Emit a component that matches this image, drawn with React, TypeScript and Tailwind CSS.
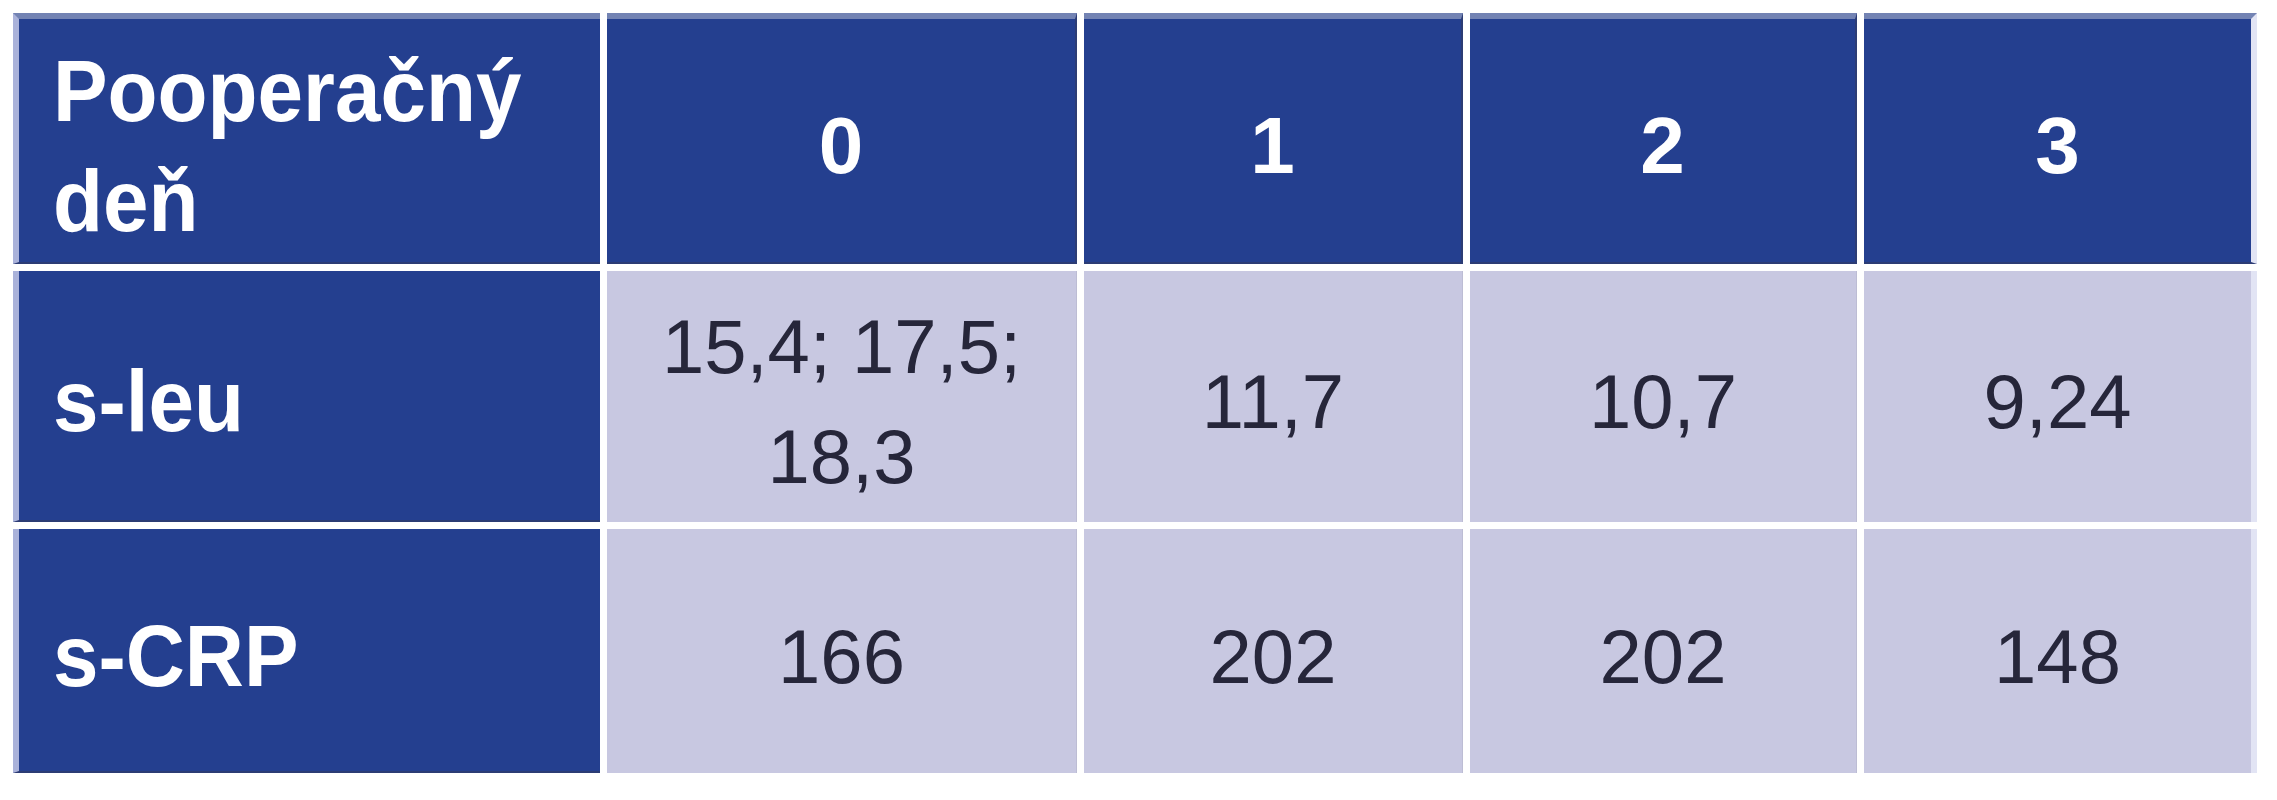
import React from "react";

const head = ["0", "1", "2", "3"];

const rows = [
  { label: "s-leu", values: [["15,4; 17,5;", "18,3"], ["11,7"], ["10,7"], ["9,24"]] },
  { label: "s-CRP", values: [["166"], ["202"], ["202"], ["148"]] },
];

function App() {
  return (
    <div className="w-[2277px] h-[800px] bg-white pt-[13px] pl-[13px] font-['Liberation_Sans',Arial,sans-serif]">
      <div className="grid grid-cols-[587px_470px_379px_387px_393px] grid-rows-[251px_251px_244px] gap-[7px]">
        {/* header row */}
        <div className="flex items-center pt-[11px] pl-[34px] bg-[#243f8f] border-t-[6px] border-l-[6px] border-t-[#7383b3] border-l-[#aab2da] border-b-2 border-b-[#2c3c74] text-white font-bold text-[88px] leading-[110px]">
          <div className="origin-left scale-x-[0.93]">
            Pooperačný
            <br />
            deň
          </div>
        </div>
        {head.map((h, i) => (
          <div
            key={h}
            className={
              i === head.length - 1
                ? "flex items-center justify-center pt-[11px] bg-[#243f8f] border-t-[6px] border-t-[#7383b3] border-b-2 border-b-[#2c3c74] border-r-[6px] border-r-[#e2e4f4] text-white font-bold text-[80px] leading-[110px]"
                : "flex items-center justify-center pt-[11px] bg-[#243f8f] border-t-[6px] border-t-[#7383b3] border-b-2 border-b-[#2c3c74] border-r-2 border-r-[#2c3c74] text-white font-bold text-[80px] leading-[110px]"
            }
          >
            {h}
          </div>
        ))}

        {rows.map((r) => (
          <React.Fragment key={r.label}>
            <div className="flex items-center pt-[11px] pl-[34px] bg-[#243f8f] border-l-[6px] border-l-[#aab2da] border-b-2 border-b-[#2c3c74] text-white font-bold text-[88px] leading-[110px]">
              <div className="origin-left scale-x-[0.93]">{r.label}</div>
            </div>
            {r.values.map((v, i) => (
              <div
                key={i}
                className={
                  i === r.values.length - 1
                    ? "flex items-center justify-center text-center pt-[11px] bg-[#c8c8e1] text-[#26263a] text-[76px] leading-[110px] border-r-[6px] border-r-[#e2e4f4]"
                    : "flex items-center justify-center text-center pt-[11px] bg-[#c8c8e1] text-[#26263a] text-[76px] leading-[110px] border-r border-r-[#bdbdd4]"
                }
              >
                <div>
                  {v.map((line, k) => (
                    <div key={k}>{line}</div>
                  ))}
                </div>
              </div>
            ))}
          </React.Fragment>
        ))}
      </div>
    </div>
  );
}

export default App;
